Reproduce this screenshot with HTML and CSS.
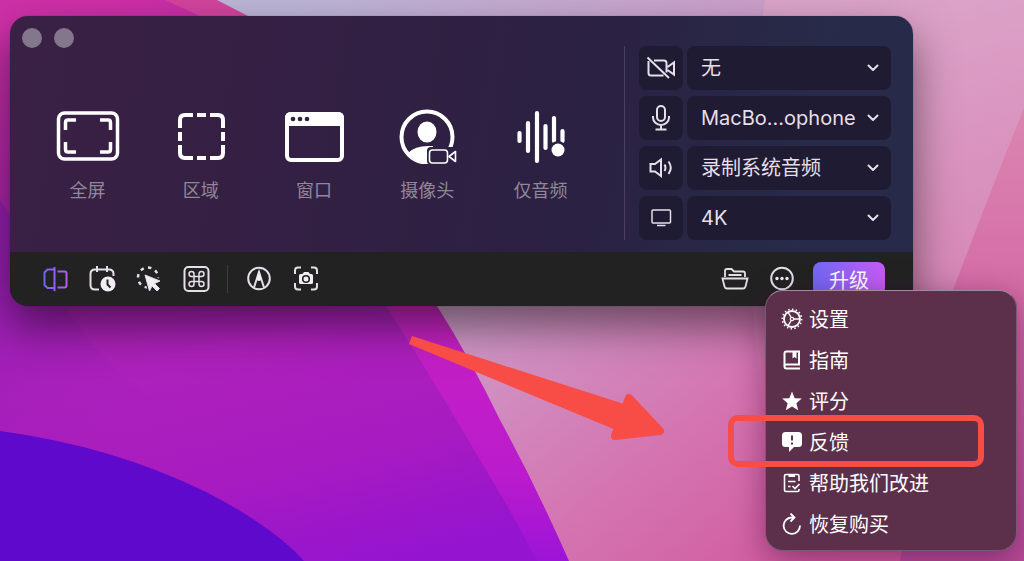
FILE: index.html
```
<!DOCTYPE html>
<html lang="zh-CN">
	<head>
		<meta charset="UTF-8" />
		<meta name="viewport" content="width=device-width, initial-scale=1.0" />
		<title>录屏</title>
		<link rel="stylesheet" href="styles.css">
	</head>
	<body>
		<svg class="wallpaper" viewBox="0 0 1024 561" preserveAspectRatio="xMidYMid slice" aria-hidden="true">
			<defs>
				<linearGradient id="pink" gradientUnits="userSpaceOnUse" x1="300" y1="0" x2="780" y2="600">
					<stop offset="0" stop-color="#bdb6d8" />
					<stop offset="0.45" stop-color="#cf9bc8" />
					<stop offset="0.75" stop-color="#d474b0" />
					<stop offset="1" stop-color="#d15a9e" />
				</linearGradient>
				<linearGradient id="pinkTop" x1="0" y1="0" x2="0" y2="1">
					<stop offset="0" stop-color="#dfa8ca" />
					<stop offset="0.5" stop-color="#d892bb" />
					<stop offset="0.9" stop-color="#d566a8" stop-opacity="0" />
				</linearGradient>
				<linearGradient id="pinkSide" x1="0" y1="0" x2="0" y2="1">
					<stop offset="0" stop-color="#da86b0" />
					<stop offset="0.45" stop-color="#d46aa6" />
					<stop offset="1" stop-color="#b84c98" />
				</linearGradient>
				<linearGradient id="magenta" gradientUnits="userSpaceOnUse" x1="100" y1="0" x2="240" y2="600">
					<stop offset="0" stop-color="#cf30a8" />
					<stop offset="0.35" stop-color="#a322a8" />
					<stop offset="0.6" stop-color="#ad21bb" />
					<stop offset="0.8" stop-color="#a81bc0" />
					<stop offset="1" stop-color="#9414d0" />
				</linearGradient>
				<linearGradient id="band" x1="0" y1="0" x2="0" y2="1">
					<stop offset="0" stop-color="#d3459c" />
					<stop offset="0.65" stop-color="#c31fc6" />
					<stop offset="0.85" stop-color="#ba1bcc" />
					<stop offset="1" stop-color="#9c14d8" />
				</linearGradient>
				<linearGradient id="fold" x1="0" y1="0" x2="0.6" y2="1">
					<stop offset="0" stop-color="#7f18b8" stop-opacity="0.5" />
					<stop offset="1" stop-color="#9a1cba" stop-opacity="0" />
				</linearGradient>
			</defs>
			<rect width="1024" height="561" fill="url(#pink)" />
			<path d="M765 0H1024V561H800Q720 300 765 0Z" fill="url(#pinkTop)" opacity="0.75" />
			<path d="M1024 108Q985 205 953 290L900 561H1024Z" fill="url(#pinkSide)" />
			<path d="M0 0H217L248 16L437 306Q470 358 500 420Q536 486 569 561H0Z" fill="url(#band)" />
			<path d="M0 0H165L200 16L386 306Q436 384 480 460Q512 512 537 561H0Z" fill="url(#magenta)" />
			<path d="M0 200L65 306Q98 360 180 425V480H0Z" fill="url(#fold)" />
			<path d="M0 431Q112 446 206 492Q274 527 304 561H0Z" fill="#5f09cc" />
		</svg>

		<main class="recorder">
			<div class="recorder-panel">
				<div class="modes-side">
					<div class="window-buttons">
						<button class="window-dot" aria-label="关闭"></button>
						<button class="window-dot" aria-label="最小化"></button>
					</div>
					<div class="modes">
						<button class="mode">
							<svg width="64" height="56" viewBox="0 0 64 56" fill="none" stroke="#fff">
								<rect x="2.500" y="5" width="59" height="46" rx="6" stroke-width="3.500" />
								<path d="M9.500 22V14.500Q9.500 12 12 12H20M44 12H52Q54.500 12 54.500 14.500V22M54.500 34V41.500Q54.500 44 52 44H44M20 44H12Q9.500 44 9.500 41.500V34" stroke-width="3.500" />
							</svg>
							<span>全屏</span>
						</button>
						<button class="mode">
							<svg width="64" height="56" viewBox="0 0 64 56" fill="none" stroke="#fff" stroke-width="4">
								<path d="M11 20V12Q11 7 16 7H24M28 7H37M41 7H49Q54 7 54 12V20M54 24V33M54 37V45Q54 50 49 50H41M37 50H28M24 50H16Q11 50 11 45V37M11 33V24" />
							</svg>
							<span>区域</span>
						</button>
						<button class="mode">
							<svg width="64" height="56" viewBox="0 0 64 56">
								<rect x="5" y="6" width="55" height="46" rx="4" fill="none" stroke="#fff" stroke-width="4" />
								<path d="M3 18V10Q3 4 9 4H56Q62 4 62 10V18Z" fill="#fff" />
								<g fill="#33203f">
									<circle cx="11" cy="11" r="2.300" />
									<circle cx="18" cy="11" r="2.300" />
									<circle cx="25" cy="11" r="2.300" />
								</g>
							</svg>
							<span>窗口</span>
						</button>
						<button class="mode">
							<svg width="64" height="56" viewBox="0 0 64 56">
								<circle cx="32" cy="29" r="25.500" fill="none" stroke="#fff" stroke-width="4" />
								<ellipse cx="32" cy="24" rx="9.500" ry="10.500" fill="#fff" />
								<path d="M13 45Q20 38 33 38H38V56H32Q20 55 13 45Z" fill="#fff" />
								<path d="M32 43Q32 39 36 39H64V56H34Q32 56 32 53Z" fill="#2f2143" />
								<rect x="34.500" y="42" width="18" height="13" rx="3" fill="none" stroke="#fff" stroke-width="1.600" />
								<path d="M54 48.500L60.500 43.500V53.500Z" fill="none" stroke="#fff" stroke-width="1.600" stroke-linejoin="round" />
							</svg>
							<span>摄像头</span>
						</button>
						<button class="mode">
							<svg width="64" height="56" viewBox="0 0 64 56">
								<path d="M11.500 25V33M20 15V43M29 5V53M37.500 18V40M46 10V33M54.500 23V33" stroke="#fff" stroke-width="4.200" stroke-linecap="round" />
								<circle cx="50" cy="42" r="9" fill="#2c2142" />
								<circle cx="50" cy="42" r="6.500" fill="#fff" />
							</svg>
							<span>仅音频</span>
						</button>
					</div>
				</div>

				<div class="sources">
					<div class="source">
						<label class="source-icon" for="camera" aria-label="摄像头">
							<svg width="30" height="30" viewBox="0 0 30 30">
								<path d="M8 7.500H18Q20.500 7.500 20.500 10V19.500M17.500 22.500H5Q2.500 22.500 2.500 20V8M21.500 14L28 9.500V21.500L21.500 17" />
								<path d="M1.500 4.500L23 25" />
							</svg>
						</label>
						<div class="source-field">
							<select id="camera"><option>无</option></select>
							<svg class="chevron" width="12" height="8" viewBox="0 0 12 8"><path d="M1.500 1.500L6 6L10.500 1.500" /></svg>
						</div>
					</div>
					<div class="source">
						<label class="source-icon" for="mic" aria-label="麦克风">
							<svg width="30" height="30" viewBox="0 0 30 30">
								<rect x="11" y="3" width="8" height="15" rx="4" />
								<path d="M7 13V14.500A8 7.500 0 0 0 23 14.500V13M15 22V26.500M9.500 26.500H20.500" />
							</svg>
						</label>
						<div class="source-field">
							<select id="mic"><option>MacBo...ophone</option></select>
							<svg class="chevron" width="12" height="8" viewBox="0 0 12 8"><path d="M1.500 1.500L6 6L10.500 1.500" /></svg>
						</div>
					</div>
					<div class="source">
						<label class="source-icon" for="audio" aria-label="系统音频">
							<svg width="30" height="30" viewBox="0 0 30 30">
								<path d="M4.500 11H9L15 6.500V23L9 18.500H4.500ZM18.500 11.500Q20.500 14.500 18.500 18M22.500 8.500Q27 14.500 22.500 21" />
							</svg>
						</label>
						<div class="source-field">
							<select id="audio"><option>录制系统音频</option></select>
							<svg class="chevron" width="12" height="8" viewBox="0 0 12 8"><path d="M1.500 1.500L6 6L10.500 1.500" /></svg>
						</div>
					</div>
					<div class="source">
						<label class="source-icon" for="quality" aria-label="画质">
							<svg width="30" height="30" viewBox="0 0 30 30">
								<rect x="6" y="7" width="18.500" height="13" rx="1" stroke-width="1.500" />
								<path d="M11 22.500H19.500" stroke-width="1.500" />
							</svg>
						</label>
						<div class="source-field">
							<select id="quality"><option>4K</option></select>
							<svg class="chevron" width="12" height="8" viewBox="0 0 12 8"><path d="M1.500 1.500L6 6L10.500 1.500" /></svg>
						</div>
					</div>
				</div>
			</div>

			<div class="toolbar">
				<button class="tool" aria-label="裁剪">
					<svg width="32" height="32" viewBox="0 0 32 32">
						<defs>
							<linearGradient id="accent" gradientUnits="userSpaceOnUse" x1="5" y1="0" x2="28" y2="0">
								<stop offset="0" stop-color="#7064f2" />
								<stop offset="1" stop-color="#b95bef" />
							</linearGradient>
						</defs>
						<path d="M15.500 4V28M15.500 6.500H8.500L5.500 9.500V22L8.500 25H15.500M18.500 8.500H25.500Q27.500 8.500 27.500 10.500V22.500Q27.500 24.500 25.500 24.500H18.500" stroke="url(#accent)" />
					</svg>
				</button>
				<button class="tool" aria-label="定时录制">
					<svg width="32" height="32" viewBox="0 0 32 32">
						<path d="M13 26.500H9Q4.500 26.500 4.500 22V11Q4.500 6.500 9 6.500H23Q27.500 6.500 27.500 11V13M11 3V9M21 3V9" />
						<circle cx="22" cy="21" r="7.500" fill="#f2edf3" stroke="none" />
						<path d="M21.500 16.500V21.500L24.500 24.500" stroke="#222" />
					</svg>
				</button>
				<button class="tool" aria-label="光标">
					<svg width="32" height="32" viewBox="0 0 32 32">
						<circle cx="15" cy="14.500" r="10" stroke-width="2.500" stroke-dasharray="3.500 4.500" pathLength="64" />
						<path d="M11 11L28 16V30H15Z" fill="#222" stroke="none" />
						<path d="M12 12L27 18L21.500 20.500L26.500 25.500L24 28L19 23L16.500 28Z" fill="#f2edf3" stroke-width="1" />
					</svg>
				</button>
				<button class="tool" aria-label="快捷键">
					<svg width="32" height="32" viewBox="0 0 32 32">
						<rect x="4.500" y="4" width="24" height="24" rx="4" />
						<path d="M14 13.500H11.500A2.500 2.500 0 1 1 14 11V21A2.500 2.500 0 1 1 11.500 18.500H21.500A2.500 2.500 0 1 1 19 21V11A2.500 2.500 0 1 1 21.500 13.500Z" stroke-width="1.500" />
					</svg>
				</button>
				<span class="toolbar-separator"></span>
				<button class="tool" aria-label="标注">
					<svg width="32" height="32" viewBox="0 0 32 32">
						<circle cx="16" cy="15.500" r="10.800" />
						<path d="M11 24.500L16 9L21 24.500" />
						<path d="M13.500 15.500L16 8L18.500 15.500Q18 18 16 18Q14 18 13.500 15.500Z" fill="#f2edf3" stroke="none" />
					</svg>
				</button>
				<button class="tool" aria-label="截图">
					<svg width="32" height="32" viewBox="0 0 32 32">
						<path d="M5 11V7.500Q5 4.500 8 4.500H11M21 4.500H24Q27 4.500 27 7.500V11M27 20V23.500Q27 26.500 24 26.500H21M11 26.500H8Q5 26.500 5 23.500V20" />
						<path d="M10.500 11H12.500L14 9H18.500L20 11H21.500Q23 11 23 12.500V19.500Q23 21 21.500 21H10.500Q9 21 9 19.500V12.500Q9 11 10.500 11Z" fill="#f2edf3" stroke="none" />
						<circle cx="16" cy="16" r="3.300" stroke="#222" stroke-width="1.600" />
					</svg>
				</button>
				<div class="toolbar-end">
					<button class="tool" aria-label="打开文件夹">
						<svg width="32" height="32" viewBox="0 0 32 32">
							<path d="M6 14V8Q6 6 8 6H12.500L15 8.500H24Q26 8.500 26 10.500V14M9.500 12H22.500M3.500 15.500H28.500L26.500 23.500Q26 25.500 24 25.500H8Q6 25.500 5.500 23.500Z" stroke-width="1.800" />
						</svg>
					</button>
					<button class="tool" aria-label="更多">
						<svg width="32" height="32" viewBox="0 0 32 32">
							<circle cx="16" cy="15.500" r="10.800" />
							<g fill="#f2edf3" stroke="none">
								<circle cx="11" cy="15.500" r="1.700" />
								<circle cx="16" cy="15.500" r="1.700" />
								<circle cx="21" cy="15.500" r="1.700" />
							</g>
						</svg>
					</button>
					<button class="upgrade">升级</button>
				</div>
			</div>
		</main>

		<nav class="menu">
			<button class="menu-item">
				<svg width="22" height="22" viewBox="0 0 22 22">
					<circle cx="11" cy="11" r="8" stroke-width="1.800" />
					<circle cx="11" cy="11" r="9.700" stroke-width="1.600" stroke-dasharray="1.500 2.500" pathLength="64" />
					<circle cx="11" cy="11" r="1.700" stroke-width="1.200" />
					<path d="M13 11H19M10 9.200L7 4.200M10 12.800L7 17.800" stroke-width="1.300" />
				</svg>
				设置
			</button>
			<button class="menu-item">
				<svg width="22" height="22" viewBox="0 0 22 22">
					<path d="M19 15.500H5.500Q3.500 15.500 3.500 17.500Q3.500 19.500 5.500 19.500H19M3.500 17.500V4.500Q3.500 2.500 5.500 2.500H18V15.500" />
					<path d="M11.500 2V9.500L13.500 8L15.500 9.500V2Z" fill="#fff" stroke="none" />
				</svg>
				指南
			</button>
			<button class="menu-item">
				<svg width="22" height="22" viewBox="0 0 22 22">
					<path d="M11 1.500L13.700 8.200L20.800 8.600L15.400 13.200L17.200 20.200L11 16.400L4.800 20.200L6.600 13.200L1.200 8.600L8.300 8.200Z" fill="#fff" stroke="none" />
				</svg>
				评分
			</button>
			<button class="menu-item highlighted">
				<svg width="22" height="22" viewBox="0 0 22 22">
					<path d="M4.500 1H17.500Q21 1 21 4.500V12.500Q21 16 17.500 16H13L8 21V16H4.500Q1 16 1 12.500V4.500Q1 1 4.500 1Z" fill="#fff" stroke="none" />
					<path d="M11 4.500V9.500M11 11.500V13.500" stroke="#5c304b" />
				</svg>
				反馈
			</button>
			<button class="menu-item">
				<svg width="22" height="22" viewBox="0 0 22 22">
					<path d="M18 9V4Q18 2.500 16.500 2.500H5Q3.500 2.500 3.500 4V18Q3.500 19.500 5 19.500H16.500Q18 19.500 18 18V17M7 9.500H14.500M7 14.500H9.500M11.500 14L14 16.500L18.500 12" stroke-width="1.600" />
					<path d="M7.500 2H14V5H7.500Z" fill="#fff" stroke="none" />
				</svg>
				帮助我们改进
			</button>
			<button class="menu-item">
				<svg width="22" height="22" viewBox="0 0 22 22">
					<path d="M13 4.500H10.500A8.200 8.200 0 1 0 19 12.500M9.500 0.500L13.500 4.500L9.500 8.500" stroke-width="1.800" />
				</svg>
				恢复购买
			</button>
		</nav>

		<svg class="arrow" width="260" height="110" viewBox="0 0 260 110" fill="#f84c46" aria-hidden="true">
			<path d="M5 2L217 70L209 96L2 10Z" />
			<path d="M222 64L253 97L208 102Z" stroke="#f84c46" stroke-width="8" stroke-linejoin="round" />
		</svg>
	</body>
</html>
```
FILE: styles.css
```
:root {
	--text: #e6dfe9;
	--muted: #918799;
	--field: #1f1b32;
	--toolbar: #222222;
	--menu: #5c304b;
	--marker: #f84c46;
}

* {
	box-sizing: border-box;
}

body {
	position: relative;
	min-height: 100vh;
	margin: 0;
	padding: 16px 111px 0 10px;
	overflow: hidden;
	font-family: 'Inter', 'Noto Sans CJK SC', sans-serif;
	color: var(--text);
}

button,
select {
	margin: 0;
	padding: 0;
	border: none;
	background: none;
	color: inherit;
	font-family: inherit;
	cursor: pointer;
}

svg {
	display: block;
	flex-shrink: 0;
}

.wallpaper {
	position: absolute;
	inset: 0;
	width: 100%;
	height: 100%;
	z-index: -1;
}

/* Recorder window */
.recorder {
	border-radius: 18px;
	overflow: hidden;
	background: linear-gradient(100deg, #3a2045 0%, #342044 30%, #2b2142 62%, #272b49 88%);
	box-shadow: 0 20px 44px rgba(0, 0, 0, 0.5), 0 0 1px rgba(0, 0, 0, 0.5);
}

.recorder-panel {
	display: flex;
	padding: 0 22px 12px 12px;
}

.modes-side {
	flex: 1;
}

.window-buttons {
	display: flex;
	gap: 12px;
	padding-top: 12px;
}

.window-dot {
	width: 20px;
	height: 20px;
	border-radius: 50%;
	background: #83778c;
}

.modes {
	display: grid;
	grid-template-columns: repeat(5, 1fr);
	margin: 60px 27px 0 9px;
}

.mode {
	display: flex;
	flex-direction: column;
	align-items: center;
	gap: 13px;
	font-size: 18px;
	line-height: 28px;
	color: var(--muted);
}

.sources {
	display: flex;
	flex-direction: column;
	gap: 6px;
	margin-top: 30px;
	padding-left: 14px;
	border-left: 1px solid #4a3f5c;
}

.source {
	display: flex;
	gap: 4px;
}

.source-icon {
	display: grid;
	place-items: center;
	width: 44px;
	height: 44px;
	border-radius: 8px;
	background: var(--field);
}

.source-icon svg,
.chevron,
.tool svg,
.menu-item svg {
	fill: none;
	stroke: var(--text);
	stroke-width: 2;
}

.source-field {
	display: grid;
	align-items: center;
	width: 204px;
	border-radius: 8px;
	background: var(--field);
}

.source-field select,
.chevron {
	grid-area: 1 / 1;
}

.source-field select {
	appearance: none;
	height: 44px;
	padding-left: 14px;
	font-size: 20px;
}

.chevron {
	justify-self: end;
	margin-right: 12px;
	stroke-linecap: round;
	stroke-linejoin: round;
	pointer-events: none;
}

.toolbar {
	display: flex;
	align-items: center;
	gap: 15px;
	height: 54px;
	padding: 0 28px 0 29px;
	background: var(--toolbar);
}

.toolbar-separator {
	width: 1px;
	height: 28px;
	background: #3d3d3d;
}

.toolbar-end {
	display: flex;
	align-items: center;
	gap: 15px;
	margin-left: auto;
}

.upgrade {
	width: 72px;
	height: 34px;
	border-radius: 8px;
	background: linear-gradient(90deg, #7068f4, #c65cf6);
	color: #fff;
	font-size: 20px;
}

/* More menu */
.menu {
	position: absolute;
	top: 290px;
	right: 7px;
	display: flex;
	flex-direction: column;
	width: 252px;
	padding: 7px 0 6px;
	border: 1px solid #7a5a70;
	border-top-color: #a08a9c;
	border-radius: 18px;
	background: var(--menu);
	box-shadow: 0 8px 32px rgba(60, 0, 50, 0.45);
}

.menu-item {
	position: relative;
	display: flex;
	align-items: center;
	gap: 6px;
	height: 41px;
	padding: 0 15px;
	color: #fff;
	font-size: 20px;
}

.menu-item svg {
	stroke: #fff;
}

.highlighted::after {
	content: '';
	position: absolute;
	inset: -6px 32px -5px -38px;
	border: 6px solid var(--marker);
	border-radius: 10px;
}

.arrow {
	position: absolute;
	left: 407px;
	top: 334px;
}
```
